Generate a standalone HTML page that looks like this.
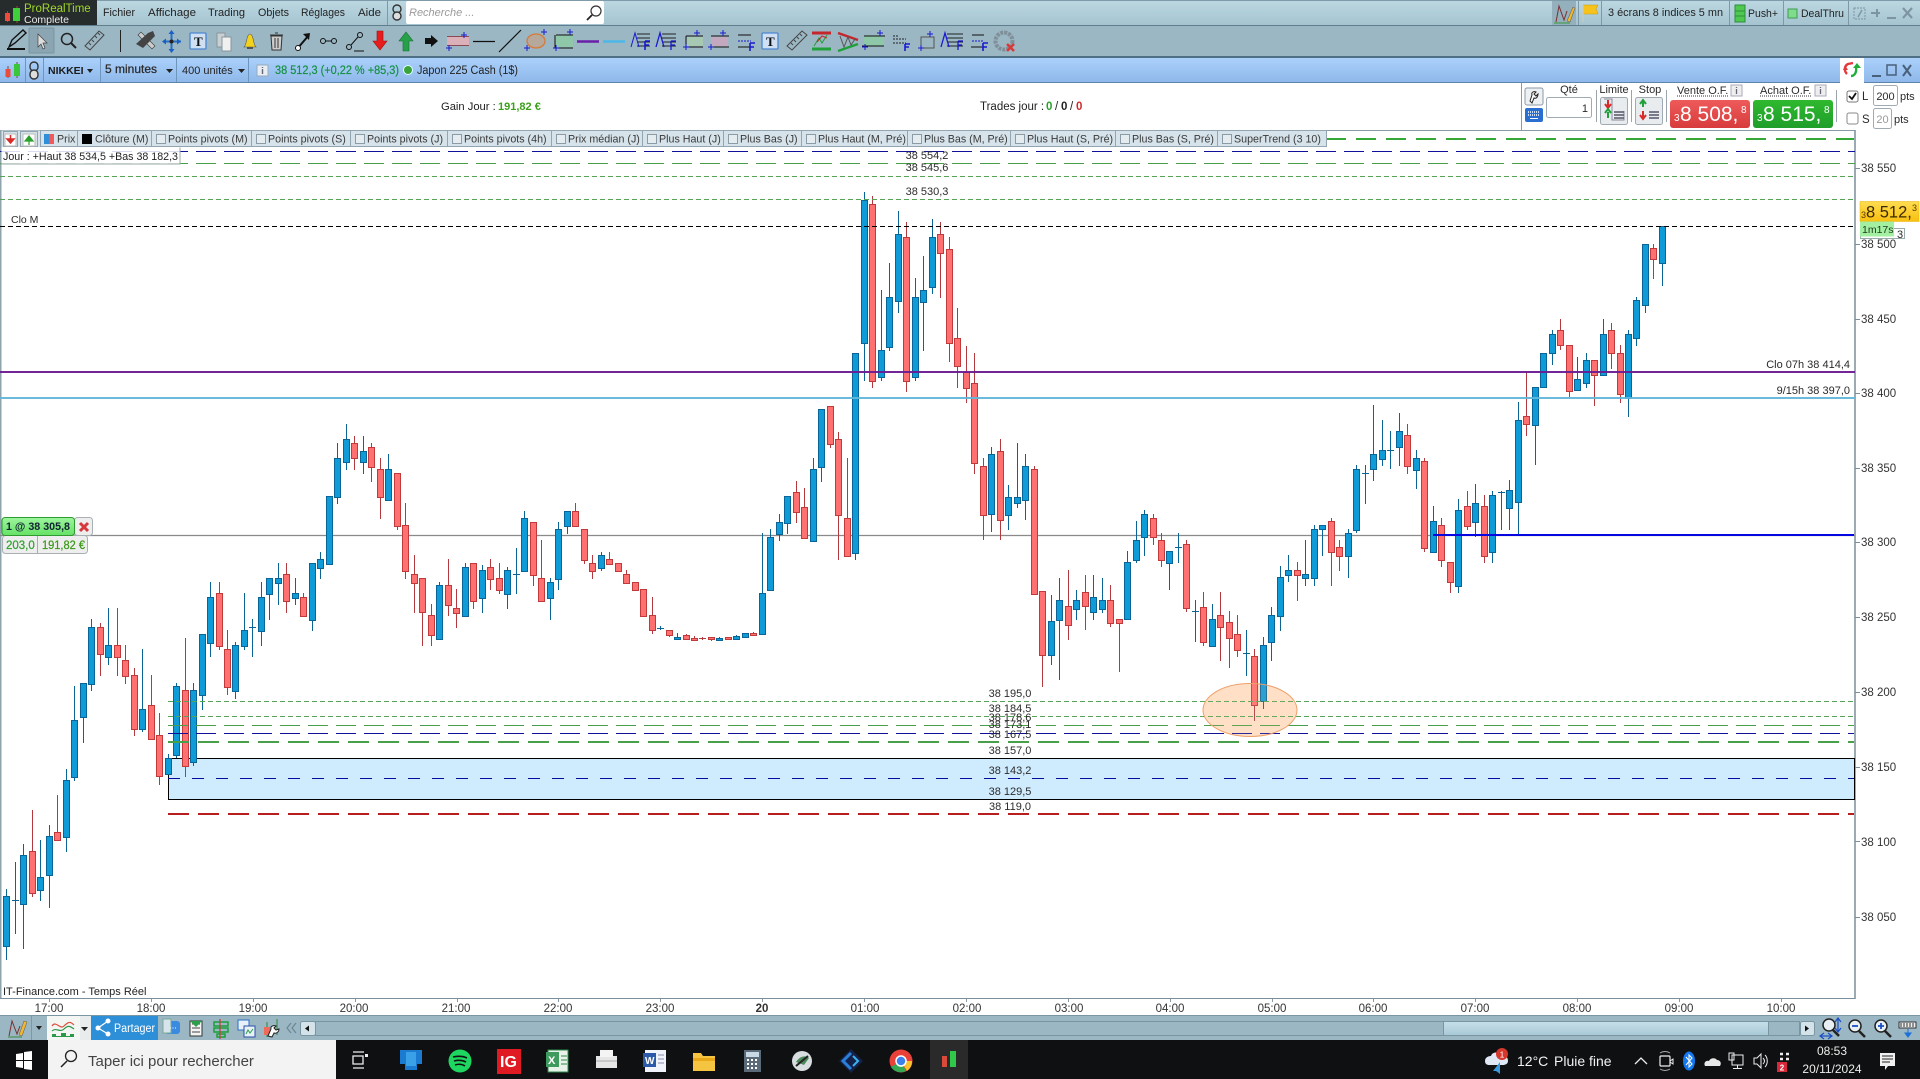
<!DOCTYPE html>
<html lang="fr"><head><meta charset="utf-8"><title>ProRealTime</title>
<style>
html,body{margin:0;padding:0;background:#fff;width:1920px;height:1079px;overflow:hidden}
svg{display:block}
text{font-family:"Liberation Sans",Arial,sans-serif;font-size:11px;fill:#2a2a2a}
.leg{font-size:10.7px;fill:#3a3a3a}
.m{font-size:11px;fill:#222}
.ax{font-size:11.5px;fill:#333;text-anchor:middle}
.yl{font-size:11.5px;fill:#333}
.lb{font-size:11px;fill:#2c2c2c;text-anchor:middle}
.tb{font-size:14px;fill:#f2f2f2}
.cb{fill:#e4ecf0;stroke:#8c9ca6}
.div{stroke:#7e98a5;stroke-width:1}
.legitem{fill:#d6e3ea;stroke:#93a5b0}
</style></head><body>
<svg xmlns="http://www.w3.org/2000/svg" width="1920" height="1079" viewBox="0 0 1920 1079">
<defs>
<linearGradient id="g1" x1="0" y1="0" x2="0" y2="1"><stop offset="0" stop-color="#bcd8e2"/><stop offset="1" stop-color="#a5c4d0"/></linearGradient>
<linearGradient id="g2" x1="0" y1="0" x2="0" y2="1"><stop offset="0" stop-color="#abd0fb"/><stop offset="1" stop-color="#8fb9eb"/></linearGradient>
<linearGradient id="g3" x1="0" y1="0" x2="0" y2="1"><stop offset="0" stop-color="#c6e0ea"/><stop offset="1" stop-color="#a8c8d6"/></linearGradient>
<linearGradient id="gy" x1="0" y1="0" x2="0" y2="1"><stop offset="0" stop-color="#ffdc50"/><stop offset="1" stop-color="#f8c010"/></linearGradient>
<linearGradient id="gr" x1="0" y1="0" x2="0" y2="1"><stop offset="0" stop-color="#ee5a5a"/><stop offset="1" stop-color="#d83c3c"/></linearGradient>
<linearGradient id="gg" x1="0" y1="0" x2="0" y2="1"><stop offset="0" stop-color="#2fb82f"/><stop offset="1" stop-color="#1f9e2a"/></linearGradient>
<linearGradient id="go" x1="0" y1="0" x2="0" y2="1"><stop offset="0" stop-color="#9df59d"/><stop offset="1" stop-color="#66e266"/></linearGradient>
</defs>

<rect width="1920" height="1079" fill="#fff"/>

<!-- top menu bar -->
<rect x="0" y="0" width="1920" height="25" fill="url(#g1)"/>
<rect x="0" y="0" width="1920" height="1" fill="#7f9aa8"/>
<rect x="0" y="25" width="1920" height="1" fill="#5f7f8e"/>
<rect x="0" y="0" width="97" height="25" fill="#262b2c"/>
<path d="M7.5 11v11M17 6v17" stroke="#9a4a3a"/>
<rect x="5" y="13" width="5" height="8" fill="#ef4a3c"/><rect x="13" y="8" width="7" height="13" fill="#3fcf3a"/>
<text x="24" y="12" style="font-size:11.5px;fill:#9fd926">ProRealTime</text>
<text x="24" y="23" style="font-size:10.5px;fill:#eaeaea">Complete</text>
<text class="m" x="103" y="16" textLength="32" lengthAdjust="spacingAndGlyphs">Fichier</text><text class="m" x="148" y="16" textLength="48" lengthAdjust="spacingAndGlyphs">Affichage</text><text class="m" x="208" y="16" textLength="37" lengthAdjust="spacingAndGlyphs">Trading</text><text class="m" x="258" y="16" textLength="31" lengthAdjust="spacingAndGlyphs">Objets</text><text class="m" x="301" y="16" textLength="44" lengthAdjust="spacingAndGlyphs">Réglages</text><text class="m" x="358" y="16" textLength="23" lengthAdjust="spacingAndGlyphs">Aide</text>
<path class="div" d="M387.5 1v24"/>
<rect x="393" y="5" width="8" height="8" rx="4" fill="none" stroke="#333" stroke-width="1.4"/><rect x="393" y="12" width="8" height="8" rx="4" fill="#ddd" stroke="#333" stroke-width="1.4"/>
<rect x="406" y="1" width="198" height="23" rx="2" fill="#fff"/>
<text x="409" y="16" style="font-size:11px;font-style:italic;fill:#9a9a9a">Recherche ...</text>
<circle cx="596" cy="11" r="5" fill="#fff" stroke="#333" stroke-width="1.2"/><path d="M592 15l-5 5" stroke="#222" stroke-width="1.8"/>
<rect x="1552" y="1" width="24" height="24" fill="#93b0bc"/>
<path d="M1556 22l3-16 5 14 3-9" fill="none" stroke="#7a3030"/><path d="M1567 21l6-14 2 1-5 14z" fill="#f2b72c" stroke="#555" stroke-width=".5"/><path d="M1554 23h16" stroke="#3a9a3a"/>
<path class="div" d="M1578.5 1v24"/>
<path d="M1583 5h15l-2 4 2 5h-15z" fill="#f6c21c" stroke="#c99a10" stroke-width=".5"/><path d="M1583 5v17" stroke="#ccb"/>
<path class="div" d="M1601.5 1v24M1729.5 1v24M1783.5 1v24M1848.5 1v24"/>
<text class="m" x="1608" y="16" textLength="115" lengthAdjust="spacingAndGlyphs">3 écrans 8 indices 5 mn</text>
<rect x="1735" y="5" width="10" height="17" fill="#4fc84f" stroke="#2e8e3e"/><path d="M1735 11h10M1735 16h10" stroke="#2e8e3e"/>
<text class="m" x="1748" y="17" textLength="30" lengthAdjust="spacingAndGlyphs">Push+</text>
<rect x="1788" y="9" width="9" height="9" fill="#7fdc8a" stroke="#3f9a55"/>
<text class="m" x="1801" y="17" textLength="43" lengthAdjust="spacingAndGlyphs">DealThru</text>
<rect x="1854" y="8" width="11" height="11" fill="none" stroke="#7d95a2" stroke-dasharray="2 1"/><path d="M1858 17l4-7" stroke="#7d95a2" stroke-width="1.5"/>
<path d="M1871 13h9M1877 9v8" stroke="#7d95a2" stroke-width="2"/>
<path d="M1887 18h9" stroke="#7d95a2" stroke-width="2"/><path d="M1903 8l9 10M1912 8l-9 10" stroke="#7d95a2" stroke-width="2.2"/>

<!-- toolbar 2 -->
<rect x="0" y="26" width="1920" height="30" fill="#9bb7c4"/>
<rect x="0" y="56" width="1920" height="2" fill="#4f6f84"/>
<path d="M9 47l3-7 11-10 3 3-11 10z" fill="none" stroke="#111" stroke-width="1.4"/><path d="M7 49h18" stroke="#111" stroke-width="2"/>
<rect x="29" y="28" width="25" height="25" rx="1" fill="#8ba5b2" stroke="#7a95a2"/><path d="M38 34l0 13 3-3 2 5 2-1-2-5 4 0z" fill="#ddd" stroke="#444" stroke-width=".7"/>
<circle cx="67" cy="39" r="5.5" fill="none" stroke="#222" stroke-width="1.5"/><path d="M71 43l5 5" stroke="#222" stroke-width="2"/>
<path d="M85 46l14-15 5 4-14 15z" fill="none" stroke="#444"/><path d="M89 43l2 2M92 40l2 2M95 36l2 2M98 33l2 2" stroke="#444"/>
<path d="M120.5 30v22" stroke="#222"/>
<path d="M138 35l14 14 3-3-14-14z" fill="#ccc" stroke="#333" stroke-width=".6"/><path d="M143 48l12-12-2-5-5 2 -12 11z" fill="#444"/>
<path d="M171.5 32v19M163 41.500h18" stroke="#2a6fc4" stroke-width="2"/><path d="M171.500 30l-3 4h6zM171.500 53l-3-4h6zM162 41.500l4-3v6zM181 41.500l-4-3v6z" fill="#1a5fc4"/><circle cx="171.500" cy="41.500" r="2" fill="#222"/>
<rect x="190" y="33" width="16" height="16" rx="1" fill="#cfe0f4" stroke="#4a86d0" stroke-width="1.3"/><text x="194" y="46" style="font:bold 13px 'Liberation Serif',serif;fill:#111">T</text>
<path d="M217 33h8v14h-8z" fill="#c8d0d4" stroke="#8a969c"/><path d="M222 37h9v14h-9z" fill="#f0f0f0" stroke="#8a969c"/>
<path d="M244 47c3-2 2-12 6-13 4 1 3 11 6 13z" fill="#f3d21e" stroke="#555" stroke-width=".6"/><path d="M247 47h6v2h-6z" fill="#555"/>
<path d="M271 36h11l-1 14h-9z" fill="#ccc" stroke="#333"/><path d="M270 35h13M275 33h3M275 38v10M278 38v10" stroke="#333"/>
<path d="M297 49l12-14" stroke="#111" stroke-width="2"/><path d="M310 33l-7 1 6 6z" fill="#111"/><circle cx="298" cy="48" r="2.500" fill="#fff" stroke="#111"/>
<circle cx="323" cy="41" r="2.500" fill="none" stroke="#111"/><circle cx="334" cy="41" r="2.500" fill="none" stroke="#111"/><path d="M325 41h7" stroke="#111"/>
<circle cx="349" cy="47" r="2.500" fill="none" stroke="#111"/><circle cx="360" cy="35" r="2.500" fill="none" stroke="#111"/><path d="M351 45l7-8M354 51h10" stroke="#111"/>
<path d="M377 31h6v10h4l-7 9-7-9h4z" fill="#e81c1c" stroke="#9a1010" stroke-width=".6"/>
<path d="M403 51h6v-10h4l-7-9-7 9h4z" fill="#27a04a" stroke="#167030" stroke-width=".6"/>
<path d="M425 38h6v-3l7 6-7 6v-3h-6z" fill="#111"/>
<rect x="447" y="37" width="22" height="8" fill="#dcb0b8"/><path d="M447 36.500h22M447 45.500h22" stroke="#8a4a55"/><path d="M449 45v6M446 48h6M464 32v6M461 35h6" stroke="#1a1ad0"/>
<path d="M473 41.500h22" stroke="#111" stroke-width="1.200"/>
<path d="M499 52l22-22" stroke="#111" stroke-width="1.200"/>
<ellipse cx="536" cy="41" rx="9" ry="7" fill="#b7a89c" stroke="#d77a3a" stroke-width="1.300"/><path d="M544 29v6M541 32h6M527 45v6M524 48h6" stroke="#1a1ad0"/>
<rect x="556" y="35" width="17" height="12" fill="#8fc8a8"/><path d="M555 35v13h18M556 35h17" fill="none" stroke="#111"/><path d="M570 29v6M567 32h6M556 45v6M553 48h6" stroke="#1a1ad0"/>
<path d="M577 41.500h22" stroke="#6a1fa8" stroke-width="2.500"/><path d="M603 41.500h22" stroke="#4db8e8" stroke-width="2.500"/>
<g id="fib" stroke="#222" stroke-width="1" fill="none"><path d="M637 34h13M637 38h13M637 42h13M637 46h13"/><path d="M631 47l4-14 4 14" stroke="#1a1ad0"/><path d="M645 41h5M645 41v9M645 45h4" stroke="#1a1ad0" stroke-width="1.600"/></g>
<path d="M662 34h14M662 38h14M662 42h14M662 46h14" stroke="#222"/><path d="M656 47l4-14 4 14M671 41h5M671 41v9M671 45h4" stroke="#1a1ad0" stroke-width="1.300" fill="none"/>
<rect x="687" y="37" width="16" height="9" fill="#a7c9b4"/><path d="M686 36h17M686 36v11M684 47h19" stroke="#111" fill="none"/><path d="M697 30v6M694 33h6M686 44v6M683 47h6" stroke="#1a1ad0"/>
<rect x="711" y="37" width="17" height="9" fill="#c4a8c0"/><path d="M711 36h18M709 47h20" stroke="#111"/><path d="M723 30v6M720 33h6M711 44v6M708 47h6" stroke="#1a1ad0"/>
<path d="M738 35h13M738 47h13" stroke="#111"/><path d="M738 41h13" stroke="#1a1ad0" stroke-dasharray="2 1"/><path d="M750 43h5M750 43v8M750 47h4" stroke="#1a1ad0" stroke-width="1.600" fill="none"/>
<rect x="762" y="33" width="16" height="16" rx="1" fill="#cfe0f4" stroke="#4a86d0" stroke-width="1.300"/><text x="766" y="46" style="font:bold 13px 'Liberation Serif',serif;fill:#111">T</text>
<path d="M787 46l15-15 5 4-15 15z" fill="none" stroke="#444"/><path d="M791 43l2 2M794 40l2 2M797 37l2 2M800 34l2 2" stroke="#444"/>
<path d="M812 33h19" stroke="#c4262c" stroke-width="3"/><path d="M812 49h19" stroke="#1fa03a" stroke-width="3"/><path d="M814 46l5-8 3 5 5-8" fill="none" stroke="#1fa03a"/><path d="M817 42l5-6 5 2" fill="none" stroke="#c4262c"/>
<path d="M838 33l20 7" stroke="#c4262c" stroke-width="2.500"/><path d="M838 51l20-7" stroke="#1fa03a" stroke-width="2.500"/><path d="M840 36l4 11 4-10 3 8 4-6" fill="none" stroke="#555"/>
<rect x="864" y="36" width="20" height="10" fill="#8fc8a8"/><path d="M864 36h21M862 46h22" stroke="#111"/><path d="M880 30v6M877 33h6M865 44v6M862 47h6" stroke="#1a1ad0"/>
<path d="M893 39h13M893 43h13M893 36h6" stroke="#222" stroke-dasharray="2 1"/><path d="M905 44h5M905 44v7M905 47h4" stroke="#1a1ad0" stroke-width="1.600" fill="none"/>
<path d="M921 37h13v11h-13z" fill="none" stroke="#555"/><path d="M930 31v6M927 34h6M921 45v6M918 48h6" stroke="#1a1ad0"/>
<path d="M947 34h16M947 38h16M947 42h16M947 46h16" stroke="#222"/><path d="M941 47l4-14 4 14M958 41h5M958 41v9M958 45h4" stroke="#1a1ad0" stroke-width="1.300" fill="none"/>
<path d="M972 35h12M971 47h12" stroke="#111"/><path d="M972 41h12" stroke="#1a1ad0" stroke-dasharray="2 1"/><path d="M983 43h5M983 43v8M983 47h4" stroke="#1a1ad0" stroke-width="1.600" fill="none"/>
<circle cx="1004" cy="41" r="8.500" fill="none" stroke="#7f9099" stroke-width="4" stroke-dasharray="3 1"/><path d="M1007 44l7 7M1014 44l-7 7" stroke="#d83a3a" stroke-width="2.600"/>

<!-- blue header -->
<rect x="0" y="58" width="1920" height="24" fill="url(#g2)"/>
<rect x="0" y="82" width="1920" height="1" fill="#5d84aa"/>
<path class="div" style="stroke:#6e95bc" d="M25.500 58v24M43.500 58v24M100.500 58v24M176.500 58v24M248.500 58v24"/>
<path d="M8 66v12M17 62v16" stroke="#7a4a3a"/><rect x="5.500" y="69" width="5" height="8" fill="#ee4a3c"/><rect x="14" y="64" width="6" height="12" fill="#39c639"/>
<rect x="30" y="62" width="8" height="9" rx="4" fill="none" stroke="#333" stroke-width="1.400"/><rect x="30" y="70" width="8" height="9" rx="4" fill="#ddd" stroke="#333" stroke-width="1.400"/>
<text x="48" y="74" style="font-weight:bold;font-size:10.500px;fill:#1c1c1c">NIKKEI</text><path d="M87 69l6 0-3 4z" fill="#222"/>
<text x="105" y="73" style="font-size:12px;font-weight:normal;fill:#2a2a2a;stroke:#2a2a2a;stroke-width:.25">5 minutes</text><path d="M166 69l7 0-3.500 4z" fill="#222"/>
<text x="182" y="74" style="font-size:11px;fill:#222">400 unités</text><path d="M238 69l7 0-3.500 4z" fill="#222"/>
<rect x="257" y="65" width="11" height="11" fill="#e8eef4" stroke="#9ab"/><path d="M262.500 67v1M262.500 69v5" stroke="#667" stroke-width="1.400"/>
<text x="275" y="74" style="font-size:11.500px;fill:#159040;stroke:#159040;stroke-width:.2" textLength="124" lengthAdjust="spacingAndGlyphs">38 512,3 (+0,22 % +85,3)</text>
<circle cx="408" cy="70" r="4.500" fill="#3aa43a" stroke="#dff" stroke-width="1"/>
<text x="417" y="74" style="font-size:11.500px;fill:#222" textLength="101" lengthAdjust="spacingAndGlyphs">Japon 225 Cash (1$)</text>
<rect x="1840" y="58" width="24" height="25" fill="#fff"/>
<path d="M1847 74c-3-3-3-8 1-10l5-1" fill="none" stroke="#e03a3a" stroke-width="2.400"/><path d="M1845 65l-2 5 5 0z" fill="#e03a3a"/>
<path d="M1851 76c3 0 6-3 5-9" fill="none" stroke="#1fae3a" stroke-width="2.400"/><path d="M1853 68h8l-4-5z" fill="#1fae3a"/>
<path d="M1872 76h9" stroke="#49607a" stroke-width="2"/><rect x="1887" y="65" width="9" height="10" fill="none" stroke="#49607a" stroke-width="1.500"/><path d="M1903 65l8 11M1911 65l-8 11" stroke="#49607a" stroke-width="2"/>

<!-- info row -->
<text x="441" y="110" style="font-size:11.200px;fill:#222">Gain Jour :</text>
<text x="498" y="110" style="font-size:11px;font-weight:bold;fill:#3ca01a">191,82 €</text>
<text x="980" y="110" style="font-size:11.500px;fill:#222">Trades jour :</text>
<text x="1046" y="110" style="font-size:11.500px;font-weight:bold;fill:#2aa02a">0</text><text x="1055" y="110" style="font-size:11.500px;fill:#222">/</text><text x="1061" y="110" style="font-size:11.500px;font-weight:bold;fill:#222">0</text><text x="1070" y="110" style="font-size:11.500px;fill:#222">/</text><text x="1076" y="110" style="font-size:11.500px;font-weight:bold;fill:#d02a2a">0</text>

<!-- order panel -->
<path d="M1521.500 83v47" stroke="#8a9aa6"/>
<rect x="1525" y="88" width="18" height="17" rx="2" fill="#eef1f3" stroke="#8a9aa6"/><path d="M1530 101l2-6c-1-3 2-4 4-3l-2 2 2 2 2-2c0 3-2 5-4 4l-2 5z" fill="#fff" stroke="#222" stroke-width="1"/>
<rect x="1525" y="108" width="18" height="14" rx="2" fill="#2a6fd0"/><path d="M1528 112h12M1528 115h12" stroke="#fff" stroke-width="1.500" stroke-dasharray="1 1"/><path d="M1530 118.500h8" stroke="#fff"/>
<text x="1569" y="93" text-anchor="middle">Qté</text>
<rect x="1546.500" y="97.500" width="45" height="20" rx="2" fill="#fff" stroke="#a0aab2"/><text x="1588" y="112" text-anchor="end">1</text>
<path d="M1596.500 90v32M1631.500 90v32M1666.500 90v32M1836.500 90v32" stroke="#9aa4ac"/>
<text x="1614" y="93" text-anchor="middle">Limite</text><text x="1650" y="93" text-anchor="middle">Stop</text>
<rect x="1600.500" y="97.500" width="27" height="27" rx="2" fill="#e8ecef" stroke="#a0aab2"/><rect x="1635.500" y="97.500" width="27" height="27" rx="2" fill="#e8ecef" stroke="#a0aab2"/>
<path d="M1608 100v7M1605 104l3 4 3-4" fill="none" stroke="#d82a2a" stroke-width="2"/><path d="M1608 118v-6M1605 113l3-4 3 4" fill="none" stroke="#1fa03a" stroke-width="2"/><path d="M1604 99h8v21h12v-9" fill="none" stroke="#889"/><path d="M1614 112h10M1614 115h10M1614 118h10" stroke="#556" stroke-width="1.500"/>
<path d="M1643 107v-6M1640 104l3-4 3 4" fill="none" stroke="#1fa03a" stroke-width="2"/><path d="M1643 111v7M1640 115l3 4 3-4" fill="none" stroke="#d82a2a" stroke-width="2"/><path d="M1649 112h10M1649 115h10M1649 118h10" stroke="#556" stroke-width="1.500"/>
<text x="1677" y="94" style="font-size:11px">Vente O.F.</text><path d="M1677 96h51M1760 96h52" stroke="#333" stroke-dasharray="1 1"/>
<rect x="1731" y="85" width="11" height="11" fill="#eee" stroke="#aab"/><path d="M1736.500 87v1M1736.500 89v5" stroke="#667" stroke-width="1.300"/>
<text x="1760" y="94" style="font-size:11px">Achat O.F.</text>
<rect x="1815" y="85" width="11" height="11" fill="#eee" stroke="#aab"/><path d="M1820.500 87v1M1820.500 89v5" stroke="#667" stroke-width="1.300"/>
<rect x="1670" y="100" width="80" height="28" rx="3" fill="url(#gr)"/>
<text x="1674" y="121" style="font-size:10px;fill:#fff">3</text><text x="1680" y="121" style="font-size:21px;fill:#fff">8 508,</text><text x="1741" y="113" style="font-size:10px;fill:#fff">8</text>
<rect x="1753" y="100" width="80" height="28" rx="3" fill="url(#gg)"/>
<text x="1757" y="121" style="font-size:10px;fill:#fff">3</text><text x="1763" y="121" style="font-size:21px;fill:#fff">8 515,</text><text x="1824" y="113" style="font-size:10px;fill:#fff">8</text>
<rect x="1847" y="91" width="11" height="11" rx="2" fill="#fff" stroke="#777"/><path d="M1849 96l3 3 4-6" fill="none" stroke="#111" stroke-width="1.800"/>
<text x="1862" y="100" style="font-size:11.500px">L</text>
<rect x="1873.500" y="85.500" width="24" height="20" rx="2" fill="#fff" stroke="#a0aab2"/><text x="1885.500" y="100" text-anchor="middle">200</text><text x="1900" y="100">pts</text>
<rect x="1847" y="113" width="11" height="11" rx="2" fill="#fff" stroke="#8a8a8a"/>
<text x="1862" y="123" style="font-size:11.500px">S</text>
<rect x="1873.500" y="108.500" width="18" height="20" rx="2" fill="#fff" stroke="#a0aab2"/><text x="1882.500" y="123" text-anchor="middle" style="fill:#999">20</text><text x="1894" y="123">pts</text>
<path d="M0 130.500h1855" stroke="#8a9aa6"/>

<!-- chart frame -->
<rect x="0" y="130" width="1.500" height="869" fill="#8fa3ad"/>
<path d="M1855 130v869" stroke="#7a8f9b" stroke-width="1.500"/>
<path d="M0 998.500h1855" stroke="#7a8f9b"/>

<!-- zone and levels behind candles -->
<rect x="168.500" y="758.500" width="1686" height="41" fill="#cfebfe" stroke="#000"/>
<path d="M0 535.500h1855" stroke="#8a8a8a" stroke-width="1.200"/>
<ellipse cx="1250" cy="710" rx="47" ry="26.500" fill="#ffd9bb" fill-opacity=".75"/>

<!-- candles -->
<path fill="none" stroke="#0a6496" d="M6.500 889V960M15.500 862V934M12 900.500h7M23.500 844V949M40.500 840V901M49.500 825V908M66.500 769V852M74.500 686V781M83.500 683V743M91.500 619V691M108.500 608V665M142.500 649V732M168.500 754V774M176.500 683V758M193.500 683V766M202.500 634V710M210.500 582V657M235.500 642V699M244.500 593V650M252.500 619V657M249 627.500h7M261.500 582V646M269.500 578V620M278.500 563V605M295.500 578V605M312.500 563V631M320.500 552V579M329.500 496V564M337.500 443V504M346.500 424V470M363.500 436V474M388.500 454V500M439.500 582V639M465.500 563V616M482.500 565V613M507.500 567V609M516.500 548V594M513 574.500h7M524.500 511V571M550.500 578V620M558.500 522V590M567.500 511V534M601.500 552V571M660.500 626V630M657 628.500h7M677.500 633V640M719.500 637V640M736.500 635V640M745.500 633V637M762.500 533V635M770.500 529V590M779.500 514V541M787.500 496V534M813.500 458V541M821.500 409V482M855.500 353V560M864.500 192V381M881.500 290V381M889.500 263V351M898.500 211V313M915.500 278V381M923.500 256V351M932.500 219V294M991.500 447V532M1008.500 485V530M1017.500 443V508M1025.500 454V520M1051.500 595V665M1059.500 578V680M1076.500 590V620M1093.500 575V620M1102.500 578V613M1127.500 551V619M1136.500 521V563M1144.500 510V556M1169.500 551V590M1178.500 533V563M1175 547.500h7M1195.500 600V642M1192 611.500h7M1212.500 604V646M1246.500 630V676M1243 653.500h7M1263.500 637V709M1271.500 607V661M1280.500 566V631M1288.500 555V582M1305.500 540V586M1314.500 525V586M1322.500 525V556M1348.500 529V578M1356.500 465V533M1365.500 465V504M1362 473.500h7M1373.500 405V481M1382.500 420V466M1390.500 431V469M1387 450.500h7M1399.500 413V466M1416.500 450V489M1433.500 506V552M1458.500 499V593M1475.500 484V537M1492.500 491V563M1501.500 491V530M1498 492.500h7M1509.500 480V530M1518.500 402V535M1535.500 387V465M1543.500 353V387M1552.500 330V365M1577.500 357V390M1586.500 353V388M1603.500 319V375M1628.500 330V417M1636.500 297V346M1645.500 244V313M1662.500 226V286"/>
<path fill="none" stroke="#b23a3f" d="M32.500 810V897M57.500 795V840M100.500 623V676M117.500 608V676M125.500 645V684M134.500 668V736M151.500 675V739M159.500 713V785M185.500 638V777M219.500 582V650M227.500 630V695M286.500 563V613M303.500 593V616M354.500 436V470M371.500 443V482M380.500 458V519M397.500 473V530M405.500 503V579M414.500 555V613M422.500 578V646M431.500 604V646M448.500 559V616M456.500 589V628M473.500 563V609M490.500 559V590M499.500 563V594M533.500 522V586M541.500 540V601M575.500 503V526M584.500 529V564M592.500 555V579M609.500 552V564M618.500 563V571M626.500 570V583M635.500 582V590M643.500 589V616M652.500 597V634M669.500 630V637M686.500 634V639M694.500 636V640M702.500 637V640M699 638.500h7M711.500 637V641M728.500 637V640M753.500 632V635M796.500 481V523M804.500 488V538M830.500 406V448M838.500 432V560M847.500 458V556M872.500 196V388M906.500 222V392M940.500 222V298M949.500 237V362M957.500 308V388M966.500 346V403M974.500 353V474M983.500 458V540M1000.500 439V540M1034.500 466V594M1042.500 591V687M1068.500 570V640M1085.500 575V630M1110.500 585V627M1119.500 619V672M1153.500 514V545M1161.500 533V567M1186.500 540V612M1203.500 592V646M1220.500 592V661M1229.500 611V668M1237.500 615V657M1254.500 649V721M1297.500 562V601M1331.500 518V586M1339.500 540V571M1407.500 424V474M1424.500 458V552M1441.500 518V567M1450.500 562V593M1467.500 491V530M1484.500 495V563M1526.500 372V436M1560.500 319V350M1569.500 345V397M1594.500 360V406M1611.500 323V369M1620.500 345V403M1653.500 244V279"/>
<path fill="#0f9bd8" stroke="#0a6496" d="M3.500 896.500h6v50h-6zM20.500 855.500h6v49h-6zM37.500 877.500h6v13h-6zM46.500 836.500h6v39h-6zM63.500 780.500h6v57h-6zM71.500 720.500h6v57h-6zM80.500 683.500h6v34h-6zM88.500 627.500h6v57h-6zM105.500 645.500h6v12h-6zM139.500 709.500h6v20h-6zM165.500 758.500h6v16h-6zM173.500 686.500h6v69h-6zM190.500 690.500h6v72h-6zM199.500 634.500h6v61h-6zM207.500 597.500h6v46h-6zM232.500 645.500h6v46h-6zM241.500 630.500h6v16h-6zM258.500 597.500h6v34h-6zM266.500 578.500h6v16h-6zM275.500 578.500h6v5h-6zM292.500 593.500h6v5h-6zM309.500 563.500h6v57h-6zM317.500 559.500h6v9h-6zM326.500 496.500h6v68h-6zM334.500 458.500h6v39h-6zM343.500 439.500h6v23h-6zM360.500 451.500h6v11h-6zM385.500 469.500h6v31h-6zM436.500 585.500h6v54h-6zM462.500 567.500h6v49h-6zM479.500 570.500h6v28h-6zM504.500 570.500h6v24h-6zM521.500 518.500h6v53h-6zM547.500 582.500h6v16h-6zM555.500 529.500h6v50h-6zM564.500 511.500h6v15h-6zM598.500 555.500h6v13h-6zM674.500 637.500h6v2h-6zM716.500 638.500h6v2h-6zM733.500 636.500h6v3h-6zM742.500 633.500h6v4h-6zM759.500 593.500h6v41h-6zM767.500 537.500h6v53h-6zM776.500 522.500h6v12h-6zM784.500 496.500h6v27h-6zM810.500 469.500h6v72h-6zM818.500 409.500h6v58h-6zM852.500 353.500h6v200h-6zM861.500 200.500h6v143h-6zM878.500 350.500h6v27h-6zM886.500 297.500h6v50h-6zM895.500 234.500h6v67h-6zM912.500 297.500h6v80h-6zM920.500 290.500h6v12h-6zM929.500 237.500h6v50h-6zM988.500 454.500h6v60h-6zM1005.500 497.500h6v18h-6zM1014.500 497.500h6v6h-6zM1022.500 466.500h6v34h-6zM1048.500 621.500h6v34h-6zM1056.500 600.500h6v20h-6zM1073.500 600.500h6v9h-6zM1090.500 597.500h6v15h-6zM1099.500 600.500h6v9h-6zM1124.500 562.500h6v57h-6zM1133.500 540.500h6v20h-6zM1141.500 514.500h6v23h-6zM1166.500 551.500h6v12h-6zM1209.500 619.500h6v27h-6zM1260.500 645.500h6v56h-6zM1268.500 615.500h6v27h-6zM1277.500 577.500h6v39h-6zM1285.500 570.500h6v5h-6zM1302.500 574.500h6v4h-6zM1311.500 529.500h6v49h-6zM1319.500 525.500h6v4h-6zM1345.500 533.500h6v23h-6zM1353.500 469.500h6v61h-6zM1370.500 454.500h6v15h-6zM1379.500 450.500h6v9h-6zM1396.500 431.500h6v16h-6zM1413.500 458.500h6v12h-6zM1430.500 521.500h6v31h-6zM1455.500 510.500h6v76h-6zM1472.500 503.500h6v19h-6zM1489.500 495.500h6v57h-6zM1506.500 490.500h6v18h-6zM1515.500 420.500h6v82h-6zM1532.500 387.500h6v38h-6zM1540.500 353.500h6v34h-6zM1549.500 334.500h6v19h-6zM1574.500 379.500h6v11h-6zM1583.500 360.500h6v23h-6zM1600.500 334.500h6v41h-6zM1625.500 334.500h6v64h-6zM1633.500 300.500h6v38h-6zM1642.500 244.500h6v61h-6zM1659.500 226.500h6v37h-6z"/>
<path fill="#ff7070" stroke="#c0393b" d="M29.500 851.500h6v42h-6zM54.500 832.500h6v8h-6zM97.500 627.500h6v27h-6zM114.500 645.500h6v12h-6zM122.500 660.500h6v16h-6zM131.500 675.500h6v54h-6zM148.500 705.500h6v34h-6zM156.500 735.500h6v41h-6zM182.500 690.500h6v76h-6zM216.500 593.500h6v53h-6zM224.500 649.500h6v38h-6zM283.500 574.500h6v27h-6zM300.500 597.500h6v19h-6zM351.500 443.500h6v15h-6zM368.500 447.500h6v20h-6zM377.500 469.500h6v28h-6zM394.500 473.500h6v53h-6zM402.500 525.500h6v46h-6zM411.500 574.500h6v9h-6zM419.500 578.500h6v34h-6zM428.500 615.500h6v20h-6zM445.500 585.500h6v20h-6zM453.500 608.500h6v5h-6zM470.500 563.500h6v38h-6zM487.500 567.500h6v12h-6zM496.500 578.500h6v12h-6zM530.500 522.500h6v53h-6zM538.500 578.500h6v23h-6zM572.500 511.500h6v15h-6zM581.500 529.500h6v31h-6zM589.500 563.500h6v8h-6zM606.500 559.500h6v5h-6zM615.500 563.500h6v8h-6zM623.500 574.500h6v9h-6zM632.500 582.500h6v8h-6zM640.500 589.500h6v27h-6zM649.500 615.500h6v15h-6zM666.500 630.500h6v5h-6zM683.500 635.500h6v4h-6zM691.500 638.500h6v2h-6zM708.500 637.500h6v2h-6zM725.500 637.500h6v2h-6zM750.500 633.500h6v2h-6zM793.500 492.500h6v20h-6zM801.500 507.500h6v31h-6zM827.500 406.500h6v38h-6zM835.500 439.500h6v76h-6zM844.500 518.500h6v38h-6zM869.500 204.500h6v177h-6zM903.500 237.500h6v144h-6zM937.500 234.500h6v19h-6zM946.500 249.500h6v94h-6zM954.500 338.500h6v28h-6zM963.500 372.500h6v16h-6zM971.500 383.500h6v80h-6zM980.500 466.500h6v49h-6zM997.500 451.500h6v69h-6zM1031.500 469.500h6v125h-6zM1039.500 591.500h6v64h-6zM1065.500 606.500h6v19h-6zM1082.500 592.500h6v14h-6zM1107.500 600.500h6v23h-6zM1116.500 619.500h6v4h-6zM1150.500 518.500h6v19h-6zM1158.500 540.500h6v20h-6zM1183.500 544.500h6v64h-6zM1200.500 607.500h6v35h-6zM1217.500 615.500h6v12h-6zM1226.500 622.500h6v16h-6zM1234.500 634.500h6v16h-6zM1251.500 656.500h6v49h-6zM1294.500 570.500h6v5h-6zM1328.500 521.500h6v31h-6zM1336.500 547.500h6v9h-6zM1404.500 435.500h6v31h-6zM1421.500 461.500h6v87h-6zM1438.500 525.500h6v35h-6zM1447.500 562.500h6v20h-6zM1464.500 506.500h6v20h-6zM1481.500 506.500h6v50h-6zM1523.500 416.500h6v8h-6zM1557.500 330.500h6v15h-6zM1566.500 345.500h6v46h-6zM1591.500 360.500h6v15h-6zM1608.500 330.500h6v23h-6zM1617.500 353.500h6v41h-6zM1650.500 248.500h6v11h-6z"/>

<!-- horizontal levels -->
<path d="M1326 139h528" stroke="#36a836" stroke-width="2" stroke-dasharray="20 10"/>
<path d="M0 151.500h1855" stroke="#10109a" stroke-dasharray="20 8"/>
<path d="M0 163.500h1855" stroke="#4a9e4a" stroke-dasharray="20 8"/>
<path d="M0 176.500h1855M0 199.500h1855" stroke="#55a355" stroke-dasharray="5 3"/>
<path d="M0 226.500h1855" stroke="#000" stroke-dasharray="5 3"/>
<path d="M0 372h1855" stroke="#6a1a92" stroke-width="2" stroke-opacity=".95"/>
<path d="M0 398h1855" stroke="#62b6da" stroke-width="2" stroke-opacity=".95"/>
<path d="M1433 535h421" stroke="#0606e0" stroke-width="2"/>
<path d="M168 701.500h1686M168 716.500h1686" stroke="#55a355" stroke-dasharray="5 3"/>
<path d="M168 725.500h1686" stroke="#4a9e4a" stroke-dasharray="20 8"/>
<path d="M168 733.500h1686" stroke="#10109a" stroke-dasharray="20 8"/>
<path d="M168 742h1686" stroke="#4aa04a" stroke-width="2" stroke-dasharray="21 9"/>
<path d="M168 778.500h1686" stroke="#0a0a9a" stroke-dasharray="12 12"/>
<path d="M168 814h1686" stroke="#b81e1e" stroke-width="2" stroke-dasharray="21 9"/>
<ellipse cx="1250" cy="710" rx="47" ry="26.500" fill="#ffcfa8" fill-opacity=".12" stroke="#eda06a" stroke-width="1"/>

<!-- legend -->
<rect x="1.500" y="130.500" width="1324" height="16.500" fill="#d6e3ea"/>
<g fill="#d6e3ea" stroke="#93a5b0">
<rect x="3.500" y="131.500" width="14" height="15"/><rect x="20.500" y="131.500" width="17" height="15"/><rect x="40.500" y="130.500" width="37" height="16"/><rect x="77.500" y="130.500" width="74" height="16"/><rect x="151.500" y="130.500" width="100" height="16"/><rect x="251.500" y="130.500" width="99" height="16"/><rect x="350.500" y="130.500" width="97" height="16"/><rect x="447.500" y="130.500" width="104" height="16"/><rect x="551.500" y="130.500" width="91" height="16"/><rect x="642.500" y="130.500" width="81" height="16"/><rect x="723.500" y="130.500" width="78" height="16"/><rect x="801.500" y="130.500" width="106" height="16"/><rect x="907.500" y="130.500" width="103" height="16"/><rect x="1010.500" y="130.500" width="105" height="16"/><rect x="1115.500" y="130.500" width="102" height="16"/><rect x="1217.500" y="130.500" width="109" height="16"/>
</g>
<rect x="5" y="134" width="11" height="12" fill="#fff" stroke="#bbb"/><path d="M10.500 135v5M7 139l3.500 4 3.500-4z" fill="#d82a2a" stroke="#d82a2a" stroke-width="1.500"/>
<rect x="23" y="134" width="12" height="12" fill="#fff" stroke="#bbb"/><path d="M29 145v-4M25 141l4-5 4 5z" fill="#2aa02a" stroke="#2aa02a" stroke-width="1.200"/>
<rect x="44" y="134" width="5" height="10" fill="#2f8fd8"/><rect x="49" y="134" width="5" height="10" fill="#f05a5a"/>
<text class="leg" x="57" y="142.500">Prix</text>
<rect x="82" y="134" width="10" height="10" fill="#000"/><text class="leg" x="95" y="142.500">Clôture (M)</text>
<g class="cb" fill="#e4ecf0" stroke="#8c9ca6">
<rect x="156.500" y="134.500" width="9" height="9"/><rect x="256.500" y="134.500" width="9" height="9"/><rect x="355.500" y="134.500" width="9" height="9"/><rect x="452.500" y="134.500" width="9" height="9"/><rect x="556.500" y="134.500" width="9" height="9"/><rect x="647.500" y="134.500" width="9" height="9"/><rect x="728.500" y="134.500" width="9" height="9"/><rect x="806.500" y="134.500" width="9" height="9"/><rect x="912.500" y="134.500" width="9" height="9"/><rect x="1015.500" y="134.500" width="9" height="9"/><rect x="1120.500" y="134.500" width="9" height="9"/><rect x="1222.500" y="134.500" width="9" height="9"/>
</g>
<text class="leg" x="168" y="142.500">Points pivots (M)</text><text class="leg" x="268" y="142.500">Points pivots (S)</text><text class="leg" x="367" y="142.500">Points pivots (J)</text><text class="leg" x="464" y="142.500">Points pivots (4h)</text><text class="leg" x="568" y="142.500">Prix médian (J)</text><text class="leg" x="659" y="142.500">Plus Haut (J)</text><text class="leg" x="740" y="142.500">Plus Bas (J)</text><text class="leg" x="818" y="142.500">Plus Haut (M, Pré)</text><text class="leg" x="924" y="142.500">Plus Bas (M, Pré)</text><text class="leg" x="1027" y="142.500">Plus Haut (S, Pré)</text><text class="leg" x="1132" y="142.500">Plus Bas (S, Pré)</text><text class="leg" x="1234" y="142.500">SuperTrend (3 10)</text>

<!-- chart labels -->
<rect x="1.500" y="148" width="178" height="16" fill="#fff" fill-opacity=".85"/>
<path d="M180 147.500v16.500H1" fill="none" stroke="#9aa"/>
<text x="3" y="160" style="fill:#222" textLength="175" lengthAdjust="spacingAndGlyphs">Jour : +Haut 38 534,5 +Bas 38 182,3</text>
<text x="11" y="223" style="font-size:10.500px">Clo M</text>
<g class="lb">
<text class="lb" x="927" y="159">38 554,2</text><text class="lb" x="927" y="171">38 545,6</text><text class="lb" x="927" y="195">38 530,3</text>
<text class="lb" x="1010" y="697">38 195,0</text><text class="lb" x="1010" y="712">38 184,5</text><text class="lb" x="1010" y="721">38 178,6</text><text class="lb" x="1010" y="728">38 173,1</text><text class="lb" x="1010" y="738">38 167,5</text><text class="lb" x="1010" y="754">38 157,0</text><text class="lb" x="1010" y="774">38 143,2</text><text class="lb" x="1010" y="795">38 129,5</text><text class="lb" x="1010" y="810">38 119,0</text>
</g>
<text x="1850" y="368" text-anchor="end" style="font-size:11px">Clo 07h 38 414,4</text>
<text x="1850" y="394" text-anchor="end" style="font-size:11px">9/15h 38 397,0</text>

<!-- order tag -->
<rect x="2.500" y="535.500" width="85" height="18" rx="3" fill="#eeeeee" stroke="#a8b0b4"/>
<path d="M37.500 536v17" stroke="#aab"/>
<text x="6" y="549" style="font-size:11.500px;fill:#35a035;stroke:#35a035;stroke-width:.25">203,0</text>
<text x="42" y="549" style="font-size:11.500px;fill:#3c9a1a;stroke:#3c9a1a;stroke-width:.25" textLength="43" lengthAdjust="spacingAndGlyphs">191,82 €</text>
<rect x="74.500" y="517.500" width="18" height="18" rx="3" fill="#eee" stroke="#a8b0b4"/>
<path d="M80 523l8 8M88 523l-8 8" stroke="#d8383c" stroke-width="3"/>
<rect x="2" y="517.500" width="72.500" height="18" rx="3" fill="url(#go)" stroke="#2f9a2f"/>
<text x="6" y="530" style="font-size:11px;font-weight:bold;fill:#123" textLength="64" lengthAdjust="spacingAndGlyphs">1 @ 38 305,8</text>

<text x="3" y="996" style="font-size:11px;fill:#222" transform="translate(0 -1)">IT-Finance.com - Temps Réel</text>

<!-- right axis -->
<path d="M1855 168.500h5M1855 244.500h5M1855 319.500h5M1855 393.500h5M1855 468.500h5M1855 542.500h5M1855 617.500h5M1855 692.500h5M1855 767.500h5M1855 841.500h5M1855 917.500h5" stroke="#7a8f9b"/>
<g>
<text class="yl" x="1861" y="172">38 550</text><text class="yl" x="1861" y="248">38 500</text><text class="yl" x="1861" y="323">38 450</text><text class="yl" x="1861" y="397">38 400</text><text class="yl" x="1861" y="472">38 350</text><text class="yl" x="1861" y="546">38 300</text><text class="yl" x="1861" y="621">38 250</text><text class="yl" x="1861" y="696">38 200</text><text class="yl" x="1861" y="771">38 150</text><text class="yl" x="1861" y="846">38 100</text><text class="yl" x="1861" y="921">38 050</text>
</g>
<rect x="1860.500" y="228.500" width="44" height="10" fill="#fff" stroke="#9aa"/><text x="1897" y="238" style="font-size:11px">3</text>
<rect x="1860" y="201.500" width="59" height="20" fill="url(#gy)" stroke="#e8b000" stroke-width=".5"/>
<text x="1861" y="218" style="font-size:9px;fill:#5a3c00">3</text><text x="1866" y="217.500" style="font-size:16.500px;fill:#3a2a00">8 512,</text><text x="1912" y="211" style="font-size:9px;fill:#5a3c00">3</text>
<rect x="1860" y="221.500" width="34" height="15" fill="#a3f0a3"/>
<text x="1862" y="233" style="font-size:10.500px;fill:#1c3a1c">1m17s</text>

<!-- time axis -->
<rect x="0" y="999" width="1920" height="16" fill="#fff"/>
<path d="M49.500 999v3M151.500 999v3M253.500 999v3M355.500 999v3M457.500 999v3M558.500 999v3M660.500 999v3M762.500 999v3M864.500 999v3M966.500 999v3M1068.500 999v3M1170.500 999v3M1272.500 999v3M1373.500 999v3M1475.500 999v3M1577.500 999v3M1679.500 999v3M1781.500 999v3" stroke="#8a9aa6"/>
<g>
<text class="ax" x="49" y="1012">17:00</text><text class="ax" x="151" y="1012">18:00</text><text class="ax" x="253" y="1012">19:00</text><text class="ax" x="354" y="1012">20:00</text><text class="ax" x="456" y="1012">21:00</text><text class="ax" x="558" y="1012">22:00</text><text class="ax" x="660" y="1012">23:00</text><text class="ax" x="762" y="1012" style="font-weight:bold">20</text><text class="ax" x="865" y="1012">01:00</text><text class="ax" x="967" y="1012">02:00</text><text class="ax" x="1069" y="1012">03:00</text><text class="ax" x="1170" y="1012">04:00</text><text class="ax" x="1272" y="1012">05:00</text><text class="ax" x="1373" y="1012">06:00</text><text class="ax" x="1475" y="1012">07:00</text><text class="ax" x="1577" y="1012">08:00</text><text class="ax" x="1679" y="1012">09:00</text><text class="ax" x="1781" y="1012">10:00</text>
</g>

<!-- bottom toolbar -->
<rect x="0" y="1015" width="1920" height="25" fill="#9bb7c4"/>
<path d="M0 1015.500h1920" stroke="#7a95a2"/>
<path d="M9 1036l3-15 5 13 3-8" fill="none" stroke="#7a3030"/><path d="M19 1035l5-14 3 1-5 14z" fill="#f2b72c" stroke="#555" stroke-width=".5"/><path d="M8 1037h14" stroke="#3a8a3a"/>
<path class="div" d="M31.500 1016v24"/>
<path d="M36 1026l6 0-3 4z" fill="#222"/>
<rect x="47" y="1016" width="33" height="24" fill="#f4f6f4"/>
<path d="M52 1026c4-6 8 4 12 0s6-5 10-1" fill="none" stroke="#d8503c" stroke-width="1.200"/><path d="M52 1031c4-4 8 2 12-2s6-3 10 0" fill="none" stroke="#2a9a4a" stroke-width="1.200"/>
<path d="M52 1037h22v-3h-4v2h-4v-3h-5v3h-5v-2h-4z" fill="#2a9a4a"/>
<rect x="80" y="1016" width="11" height="24" fill="#e8ecec"/><path d="M81 1027l7 0-3.500 4z" fill="#222"/>
<rect x="91" y="1016" width="67" height="24" fill="#2d8fd8"/>
<circle cx="108" cy="1021" r="2.500" fill="#fff"/><circle cx="108" cy="1034" r="2.500" fill="#fff"/><circle cx="98" cy="1028" r="2.500" fill="#fff"/><path d="M98 1028l10-7M98 1028l10 6" stroke="#fff" stroke-width="1.300"/>
<text x="114" y="1032" style="font-size:11.500px;fill:#fff" textLength="41" lengthAdjust="spacingAndGlyphs">Partager</text>
<rect x="165" y="1021" width="15" height="13" rx="3" fill="#3a8ae0"/><rect x="163" y="1019" width="8" height="14" fill="#d8e4ec" stroke="#7a9"/><path d="M170 1028h6" stroke="#fff" stroke-dasharray="1 1.500"/>
<rect x="190" y="1021" width="12" height="15" fill="#f4f4f4" stroke="#333"/><path d="M192 1024h8M192 1028h8M192 1032h8" stroke="#444"/><path d="M190 1021l6 6 6-6z" fill="#2aa04a"/>
<path d="M214 1022h14v4h-14zM214 1028h14v4h-14zM217 1034h8v3h-8z" fill="none" stroke="#1aa03a" stroke-width="1.500"/><path d="M220 1019v20" stroke="#c43a3a" stroke-width="1.200"/>
<rect x="238" y="1020" width="11" height="10" fill="#e8f0f8" stroke="#2a6fc4"/><rect x="244" y="1026" width="11" height="11" fill="#e8f0f8" stroke="#2a4fa4"/><path d="M246 1034l2-4 2 3 3-4" fill="none" stroke="#2aa04a"/>
<path d="M267 1022v15M277 1019v16" stroke="#2a8a3a"/><rect x="264" y="1027" width="6" height="8" fill="#ef6a5a"/><path d="M268 1036l3-7c-1-3 3-4 5-3l-2 2 2 2 3-1c0 3-3 5-5 4l-2 4z" fill="#fff" stroke="#222"/>
<path d="M291 1023l-4 5 4 5M296 1023l-4 5 4 5" fill="none" stroke="#6a8594" stroke-width="1.200"/>
<rect x="300.500" y="1021.500" width="15" height="14" rx="2" fill="#d4e2ea" stroke="#7a95a2"/><path d="M305 1028.500l4-3v6z" fill="#111"/>
<rect x="315.500" y="1021.500" width="1484" height="14" fill="#9bb7c4" stroke="#7a95a2"/>
<rect x="1443.500" y="1021.500" width="325" height="14" fill="url(#g3)" stroke="#7a95a2"/>
<rect x="1800.500" y="1021.500" width="14" height="14" rx="2" fill="#d4e2ea" stroke="#7a95a2"/><path d="M1809 1028.500l-4-3v6z" fill="#111"/>
<circle cx="1829" cy="1025" r="6" fill="#e8f0f4" stroke="#222" stroke-width="1.500"/><path d="M1833 1030l6 6" stroke="#222" stroke-width="2.500"/><path d="M1838 1019v12M1835 1022l3-4 3 4M1835 1028l3 4 3-4M1821 1036h10M1824 1033l-4 3 4 3M1828 1033l4 3-4 3" fill="none" stroke="#1a4fc4" stroke-width="1.200"/>
<circle cx="1855" cy="1026" r="6" fill="#e8f0f4" stroke="#222" stroke-width="1.500"/><path d="M1859 1031l6 6" stroke="#222" stroke-width="2.500"/><path d="M1852 1026h6" stroke="#1a4fc4" stroke-width="1.800"/>
<circle cx="1881" cy="1026" r="6" fill="#e8f0f4" stroke="#222" stroke-width="1.500"/><path d="M1885 1031l6 6" stroke="#222" stroke-width="2.500"/><path d="M1878 1026h6M1881 1023v6" stroke="#1a4fc4" stroke-width="1.800"/>
<rect x="1899" y="1022" width="17" height="6" fill="#eee" stroke="#333"/><path d="M1901 1023v4M1904 1023v4M1907 1023v4M1910 1023v4M1913 1023v4" stroke="#333"/><path d="M1908 1029v6M1905 1033l3 4 3-4z" fill="#1a6fd8" stroke="#1a6fd8"/>

<!-- taskbar -->
<rect x="0" y="1040" width="1920" height="39" fill="#0f1011"/>
<path d="M16 1054l7-1v7h-7zM24 1052l8-1v9h-8zM16 1061h7v7l-7-1zM24 1061h8v9l-8-1z" fill="#fff"/>
<rect x="48" y="1040" width="288" height="39" fill="#f3f3f3"/>
<circle cx="71" cy="1056" r="5.500" fill="none" stroke="#222" stroke-width="1.300"/><path d="M67 1061l-6 6" stroke="#222" stroke-width="1.500"/>
<text x="88" y="1066" style="font-size:15px;fill:#444">Taper ici pour rechercher</text>
<path d="M353 1052h11M353 1068h11M353 1056h10v8h-10z" fill="none" stroke="#eee" stroke-width="1.300"/><rect x="365" y="1054" width="3" height="3" fill="#eee"/>
<path d="M400 1050h22v14h-5v6h-12v-6h-5z" fill="#1a7bd0"/><rect x="406" y="1052" width="10" height="14" fill="#3aa0e8"/>
<circle cx="460" cy="1061" r="11.500" fill="#1ed760"/><path d="M453 1057c5-1 10-1 14 1M454 1061c4-1 8-1 12 1M455 1065c3-1 7-1 10 1" fill="none" stroke="#111" stroke-width="1.600"/>
<rect x="497" y="1049" width="24" height="25" fill="#e01a22"/><text x="500" y="1067" style="font:bold 16px 'Liberation Sans',sans-serif;fill:#fff">IG</text>
<rect x="548" y="1050" width="20" height="22" fill="#e8f2e8" stroke="#2a8a4a"/><rect x="546" y="1052" width="13" height="15" fill="#3f9a5e"/><text x="548" y="1064" style="font:bold 11px 'Liberation Sans',sans-serif;fill:#fff">X</text><path d="M561 1056h6M561 1060h6M561 1064h6" stroke="#2a8a4a"/>
<path d="M596 1056h21v12h-21z" fill="#e6e6e6"/><rect x="600" y="1050" width="13" height="7" fill="#f4f4f4"/><path d="M596 1061h21" stroke="#aaa"/>
<rect x="645" y="1050" width="21" height="22" fill="#f0f4fa"/><rect x="643" y="1053" width="13" height="14" fill="#2b5aa8"/><text x="645" y="1064" style="font:bold 10px 'Liberation Sans',sans-serif;fill:#fff">W</text><path d="M658 1055h6M658 1059h6M658 1063h6" stroke="#88a"/>
<path d="M693 1053h8l2 3h12v15h-22z" fill="#f5c542"/><rect x="693" y="1058" width="22" height="3" fill="#e8a818"/>
<rect x="744" y="1050" width="17" height="22" fill="#5a6a78"/><rect x="746" y="1052" width="13" height="5" fill="#c8d8e4"/><path d="M747 1060h2M751 1060h2M755 1060h2M747 1064h2M751 1064h2M755 1064h2M747 1068h2M751 1068h2M755 1068h2" stroke="#fff" stroke-width="2"/>
<circle cx="802" cy="1061" r="10" fill="#d8dde0"/><path d="M796 1062c4-6 9-7 13-4l-5 7z" fill="#4a8a5a"/><path d="M796 1066l12-10" stroke="#222" stroke-width="2"/>
<path d="M851 1049l12 12-12 12-12-12z" fill="#14224a"/><path d="M851 1053l-8 8 8 8" fill="none" stroke="#2a7fd8" stroke-width="3"/><path d="M853 1056l5 5-5 5" fill="none" stroke="#3ab4ef" stroke-width="2"/>
<circle cx="901" cy="1061" r="11.500" fill="#e8413a"/><path d="M901 1061l-10 6a11.500 11.500 0 0 0 15 4z" fill="#34a853"/><path d="M901 1061l6 10a11.500 11.500 0 0 0 5-10z" fill="#fbc02d"/><circle cx="901" cy="1061" r="5" fill="#3a80ee" stroke="#fff" stroke-width="1.500"/>
<rect x="930" y="1040" width="38" height="39" fill="#2a2a2a"/><rect x="942" y="1056" width="5" height="11" fill="#d84a3a"/><rect x="950" y="1051" width="6" height="16" fill="#2fc84a"/>

<path d="M1485 1061c0-4 4-5 6-5 1-4 7-5 10-1 4-1 7 2 7 6 0 3-3 4-5 4h-14c-2 0-4-1-4-4z" fill="#dfe8f4"/><path d="M1500 1062v12l-4-3h-3z" fill="#3a9ae0"/><circle cx="1502" cy="1054" r="6" fill="#d6382c"/><text x="1502" y="1057.500" text-anchor="middle" style="font-size:8.500px;fill:#fff">1</text>
<text class="tb" x="1517" y="1066">12°C</text><text class="tb" x="1554" y="1066">Pluie fine</text>
<path d="M1635 1064l6-6 6 6" fill="none" stroke="#eee" stroke-width="1.300"/>
<rect x="1660" y="1056" width="10" height="10" rx="1" fill="none" stroke="#eee" stroke-width="1.200"/><path d="M1670 1061l3-2v5l-3-2z" fill="none" stroke="#eee"/><path d="M1660 1053c3-2 7-2 10 0M1660 1069c3 2 7 2 10 0" fill="none" stroke="#aaa"/>
<ellipse cx="1689" cy="1061" rx="6" ry="9.500" fill="#1378f0"/><path d="M1686 1057l6 7-3 3v-12l3 3-6 7" fill="none" stroke="#fff"/>
<path d="M1705 1066c-2-4 2-6 4-5 1-3 6-4 8-1 3 0 5 3 3 6z" fill="#e8e8e8"/>
<rect x="1732" y="1055" width="11" height="10" fill="none" stroke="#eee"/><path d="M1737.500 1065v3M1733 1068.500h9M1729 1053h5v7h-5z" fill="none" stroke="#eee"/>
<path d="M1754 1058h3l4-4v14l-4-4h-3z" fill="none" stroke="#eee"/><path d="M1763 1058c2 2 2 4 0 6M1765 1055c3 3 3 9 0 12" fill="none" stroke="#eee"/>
<rect x="1777" y="1062" width="10" height="10" fill="#d62a3a"/><text x="1782" y="1070.500" text-anchor="middle" style="font-size:8px;font-weight:bold;fill:#fff">2</text><path d="M1780 1054h3M1786 1054h3M1780 1059h3M1786 1059h3" stroke="#eee" stroke-width="2.500"/>
<text x="1832" y="1055" text-anchor="middle" style="font-size:12px;fill:#eee">08:53</text>
<text x="1832" y="1073" text-anchor="middle" style="font-size:12px;fill:#eee">20/11/2024</text>
<path d="M1880 1053h15v13h-7l-3 4v-4h-5z" fill="#f0f0f0"/><path d="M1882 1056h11M1882 1059h11M1882 1062h8" stroke="#222"/>
</svg>
</body></html>
